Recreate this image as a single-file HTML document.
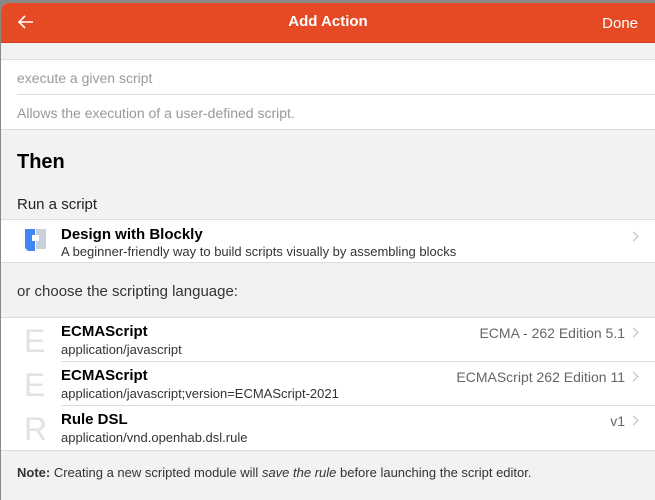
<!DOCTYPE html><html><head><style>
body{margin:0;width:655px;height:500px;overflow:hidden;background:#888;font-family:"Liberation Sans",sans-serif;}
.w{position:absolute;left:1px;top:3px;width:654px;height:497px;background:#f2f2f2;border-radius:8px 0 0 0;overflow:hidden}
.h{position:absolute;left:0;top:0;width:100%;height:39px;background:#e64a24;color:#fff;border-bottom:1px solid #d0401c}
.a{position:absolute;font-size:15px}
.t{position:absolute;left:0;width:100%;text-align:center;top:10px;font-size:15px;font-weight:bold}
.white{position:absolute;left:0;width:100%;background:#fff;border-top:1px solid #ddd;border-bottom:1px solid #ddd}
.g{color:#999;font-size:14px;position:absolute;left:16px}
.row{position:absolute;left:0;right:0;height:44px}
.ti{position:absolute;left:60px;top:5px;font-size:15px;font-weight:bold;color:#000}
.su{position:absolute;left:60px;top:24px;font-size:13px;color:#333}
.r{position:absolute;right:30px;top:7px;font-size:14px;color:#666}
.ch{position:absolute;right:18px;top:8px;width:6px;height:6px;border-right:1.5px solid #bbb;border-top:1.5px solid #bbb;transform:rotate(45deg);margin-top:3px}
.ic{position:absolute;left:23px;top:8px;font-size:32px;color:#e2e2e2;line-height:30px}
.sep{position:absolute;left:60px;right:0;bottom:0;border-bottom:1px solid #ddd}
</style></head><body><div class="w">
<div class="h"><svg class="a" style="left:16px;top:11px" width="18" height="16" viewBox="0 0 18 16"><path d="M16 8H2M8 2L2 8l6 6" stroke="#fff" stroke-width="1.6" fill="none"/></svg>
<div class="t">Add Action</div><div class="a" style="right:17px;top:12px">Done</div></div>
<div class="white" style="top:56px;height:69px"><div class="g" style="top:10px">execute a given script</div><div style="position:absolute;left:16px;right:0;top:34px;border-top:1px solid #ddd"></div><div class="g" style="top:45px">Allows the execution of a user-defined script.</div></div>
<div style="position:absolute;left:16px;top:148px;font-size:20px;font-weight:bold">Then</div>
<div style="position:absolute;left:16px;top:193px;font-size:15px;color:#222">Run a script</div>
<div class="white" style="top:216px;height:42px"><svg style="position:absolute;left:22px;top:7px" width="24" height="26"><path d="M2 2h10v6h-3v6h3v10H5l-3-3z" fill="#4285f4"/><path d="M13 2h10v20H13v-8h3V8h-3z" fill="#c8d0da"/></svg>
<div class="ti" style="top:6px">Design with Blockly</div><div class="su" style="top:24px">A beginner-friendly way to build scripts visually by assembling blocks</div><div class="ch" style="top:10px"></div></div>
<div style="position:absolute;left:16px;top:280px;font-size:15px;color:#333">or choose the scripting language:</div>
<div class="white" style="top:314px;height:132px">
<div class="row" style="top:0"><div class="ic">E</div><div class="ti">ECMAScript</div><div class="su">application/javascript</div><div class="r">ECMA - 262 Edition 5.1</div><div class="ch"></div><div class="sep"></div></div>
<div class="row" style="top:44px"><div class="ic">E</div><div class="ti">ECMAScript</div><div class="su">application/javascript;version=ECMAScript-2021</div><div class="r">ECMAScript 262 Edition 11</div><div class="ch"></div><div class="sep"></div></div>
<div class="row" style="top:88px"><div class="ic">R</div><div class="ti">Rule DSL</div><div class="su">application/vnd.openhab.dsl.rule</div><div class="r">v1</div><div class="ch"></div></div>
</div>
<div style="position:absolute;left:16px;top:462px;font-size:13px;color:#333"><b>Note:</b> Creating a new scripted module will <i>save the rule</i> before launching the script editor.</div>
</div></body></html>
